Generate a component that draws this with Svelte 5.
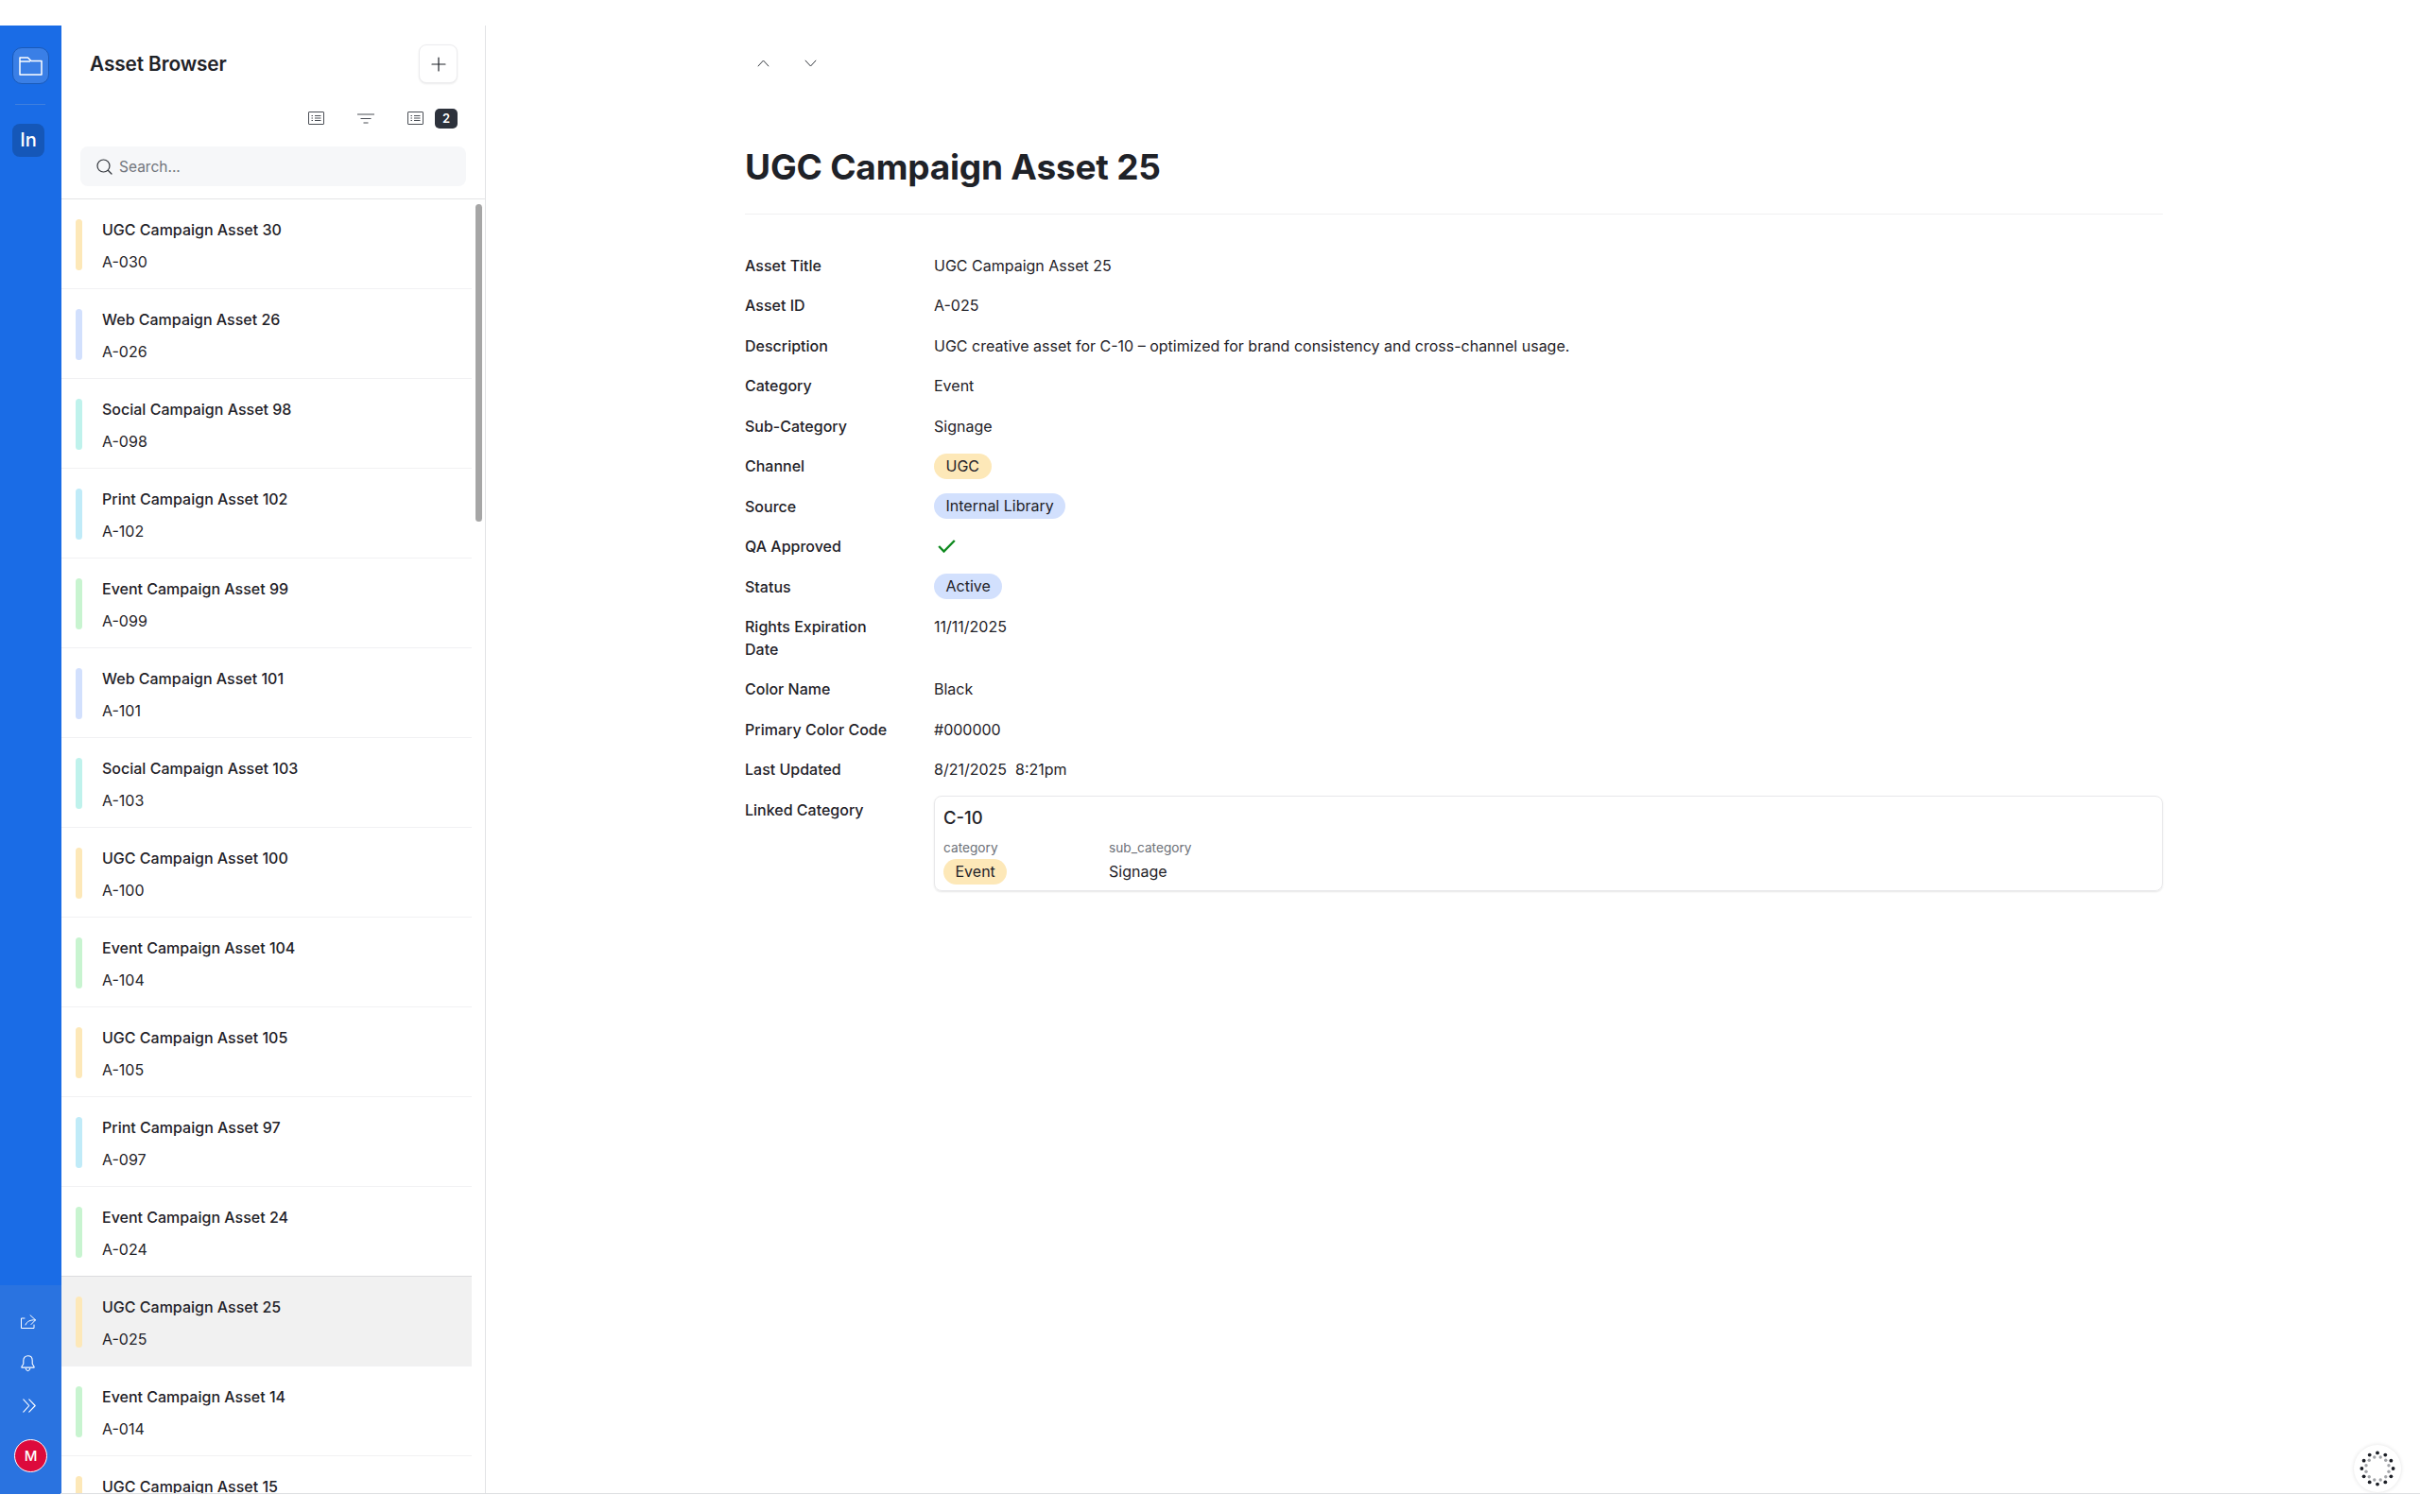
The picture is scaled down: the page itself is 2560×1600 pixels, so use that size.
<script>
	const assets = [
		{ title: 'UGC Campaign Asset 30', id: 'A-030', tone: 'ugc' },
		{ title: 'Web Campaign Asset 26', id: 'A-026', tone: 'web' },
		{ title: 'Social Campaign Asset 98', id: 'A-098', tone: 'social' },
		{ title: 'Print Campaign Asset 102', id: 'A-102', tone: 'print' },
		{ title: 'Event Campaign Asset 99', id: 'A-099', tone: 'event' },
		{ title: 'Web Campaign Asset 101', id: 'A-101', tone: 'web' },
		{ title: 'Social Campaign Asset 103', id: 'A-103', tone: 'social' },
		{ title: 'UGC Campaign Asset 100', id: 'A-100', tone: 'ugc' },
		{ title: 'Event Campaign Asset 104', id: 'A-104', tone: 'event' },
		{ title: 'UGC Campaign Asset 105', id: 'A-105', tone: 'ugc' },
		{ title: 'Print Campaign Asset 97', id: 'A-097', tone: 'print' },
		{ title: 'Event Campaign Asset 24', id: 'A-024', tone: 'event' },
		{ title: 'UGC Campaign Asset 25', id: 'A-025', tone: 'ugc', selected: true },
		{ title: 'Event Campaign Asset 14', id: 'A-014', tone: 'event' },
		{ title: 'UGC Campaign Asset 15', id: 'A-015', tone: 'ugc' }
	];

	const plainFields = [
		['Asset Title', 'UGC Campaign Asset 25'],
		['Asset ID', 'A-025'],
		['Description', 'UGC creative asset for C-10 – optimized for brand consistency and cross-channel usage.'],
		['Category', 'Event'],
		['Sub-Category', 'Signage']
	];

	const lowerFields = [
		['Color Name', 'Black'],
		['Primary Color Code', '#000000'],
		['Last Updated', '8/21/2025\u00a0\u00a08:21pm']
	];

	/* the loader in the corner: two rings of twelve dots */
	const dots = [];
	for (let i = 0; i < 12; i++) {
		const a = (i * 30 * Math.PI) / 180;
		dots.push({ x: 25 + 16.6 * Math.sin(a), y: 25 - 16.6 * Math.cos(a), r: 1.9, fill: '#1c1f26' });
		const b = a + Math.PI / 12;
		dots.push({ x: 25 + 12.4 * Math.sin(b), y: 25 - 12.4 * Math.cos(b), r: 1.7, fill: '#a2a4a8' });
	}
</script>

<div class="page">
	<nav class="rail">
		<div class="rail-top">
			<div class="tile">
				<svg width="25" height="20" viewBox="0 0 25 20" fill="none" stroke="#fff" stroke-width="1.5" stroke-linejoin="round">
					<path d="M1 19V1h8.500l3.500 3.500h11V19z" />
					<path d="M1 5h11" />
				</svg>
			</div>
			<div class="rail-rule"></div>
			<div class="logo">In</div>
		</div>
		<div class="rail-bottom">
			<svg width="16" height="15" viewBox="0 0 16 15" fill="none" stroke="#fff" stroke-width="1" stroke-linecap="round" stroke-linejoin="round">
				<path d="M10 .8L15.500 5.800 11 10.500M15.500 5.800C10 5.500 6 7.500 5 11" />
				<path d="M4 4H.5v10.500h13.500V11" />
			</svg>
			<svg width="15" height="18" viewBox="0 0 15 18" fill="none" stroke="#fff" stroke-width="1.1" stroke-linecap="round" stroke-linejoin="round">
				<path d="M7.500.8C4.700.8 2.800 2.900 2.800 5.700v3.500L.9 12.300c-.2.400 0 .8.500.8h12.200c.5 0 .7-.4.500-.8l-1.900-3.100V5.700C12.200 2.900 10.300.8 7.500.8z" />
				<path d="M5.200 14.200c.4 1.400 1.200 2.500 2.300 2.500s1.900-1.100 2.300-2.500" />
			</svg>
			<svg class="chevrons" width="14" height="15" viewBox="0 0 14 15" fill="none" stroke="#fff" stroke-width="1.100" stroke-linecap="round" stroke-linejoin="round">
				<path d="M.8.800l6 6.700-6 6.700M6.800.800l6.400 6.700-6.400 6.700" />
			</svg>
			<div class="avatar">M</div>
		</div>
	</nav>

	<aside class="browser">
		<header class="browser-head">
			<h2>Asset Browser</h2>
			<button class="add" aria-label="Add asset">
				<svg width="16" height="16" viewBox="0 0 16 16" fill="none" stroke="#1f2228" stroke-width="1.2" stroke-linecap="round">
					<path d="M8 1v14M1 8h14" />
				</svg>
			</button>
		</header>

		<div class="tools">
			<svg class="tool" width="17" height="14" viewBox="0 0 17 14" fill="none" stroke="#4a4e55" stroke-width="1">
				<rect x=".5" y=".5" width="16" height="13" rx=".5" />
				<path d="M3.500 4.500h1.500M3.500 7h1.500M3.500 9.500h1.500M7 4.500h6.500M7 7h6.500M7 9.500h6.500" />
			</svg>
			<svg class="tool filter" width="18" height="11" viewBox="0 0 18 11" fill="none" stroke="#4a4e55" stroke-width="1">
				<path d="M0 1h18M3.500 5.500h11M6.500 10h5" />
			</svg>
			<svg class="tool" width="17" height="14" viewBox="0 0 17 14" fill="none" stroke="#4a4e55" stroke-width="1">
				<rect x=".5" y=".5" width="16" height="13" rx=".5" />
				<path d="M3.500 4.500h1.500M3.500 7h1.500M3.500 9.500h1.500M7 4.500h6.500M7 7h6.500M7 9.500h6.500" />
			</svg>
			<span class="count">2</span>
		</div>

		<div class="search">
			<svg width="17" height="17" viewBox="0 0 17 17" fill="none" stroke="#31353b" stroke-width="1.2" stroke-linecap="round">
				<circle cx="7.500" cy="7.500" r="6.500" />
				<path d="M12.500 12.500l3.500 3.500" />
			</svg>
			<span>Search...</span>
		</div>

		<div class="list">
			{#each assets as asset}
				<div class="row" class:selected={asset.selected}>
					<span class="bar {asset.tone}"></span>
					<div class="row-text">
						<div class="row-title">{asset.title}</div>
						<div class="row-id">{asset.id}</div>
					</div>
				</div>
			{/each}
			<div class="scroll-thumb"></div>
		</div>
	</aside>

	<main class="detail">
		<div class="pager">
			<svg width="13" height="8" viewBox="0 0 13 8" fill="none" stroke="#33373d" stroke-width="1"><path d="M.8 7.200L6.500 1l5.700 6.200" /></svg>
			<svg width="13" height="8" viewBox="0 0 13 8" fill="none" stroke="#33373d" stroke-width="1"><path d="M.8.800L6.500 7l5.700-6.200" /></svg>
		</div>

		<h1>UGC Campaign Asset 25</h1>

		<div class="fields">
			{#each plainFields as [label, value]}
				<div class="label">{label}</div>
				<div class="value">{value}</div>
			{/each}

			<div class="label">Channel</div>
			<div class="value"><span class="pill amber">UGC</span></div>
			<div class="label">Source</div>
			<div class="value"><span class="pill blue">Internal Library</span></div>
			<div class="label">QA Approved</div>
			<div class="value check">
				<svg width="19" height="14" viewBox="0 0 19 14" fill="none" stroke="#0f8a1f" stroke-width="2.400"><path d="M1.200 7l5.300 5.500L17.800 1" /></svg>
			</div>
			<div class="label">Status</div>
			<div class="value"><span class="pill blue">Active</span></div>
			<div class="label">Rights Expiration Date</div>
			<div class="value">11/11/2025</div>

			{#each lowerFields as [label, value]}
				<div class="label">{label}</div>
				<div class="value">{value}</div>
			{/each}

			<div class="label">Linked Category</div>
			<div class="card">
				<div class="card-title">C-10</div>
				<div class="card-cols">
					<div>
						<div class="card-key">category</div>
						<span class="pill amber">Event</span>
					</div>
					<div>
						<div class="card-key">sub_category</div>
						<div class="card-val">Signage</div>
					</div>
				</div>
			</div>
		</div>
	</main>

	<div class="loader">
		<svg width="50" height="50" viewBox="0 0 50 50">
			{#each dots as d}
				<circle cx={d.x} cy={d.y} r={d.r} fill={d.fill} />
			{/each}
		</svg>
	</div>
</div>

<style>
	:global(body) {
		margin: 0;
		background: #fff;
		font-family: Inter, 'Liberation Sans', sans-serif;
		color: #1f2228;
	}
	.page {
		position: relative;
		display: flex;
		box-sizing: border-box;
		height: 1581px;
		padding-top: 27px;
		overflow: hidden;
	}
	.page::after {
		content: '';
		position: absolute;
		left: 64px;
		right: 0;
		bottom: 0;
		height: 1px;
		background: #dcdee1;
	}

	.rail {
		width: 65px;
		flex: none;
		display: flex;
		flex-direction: column;
		justify-content: space-between;
		background: #1a6ce6;
	}
	.rail-top {
		display: flex;
		flex-direction: column;
		padding: 23px 0 0 13px;
	}
	.tile {
		width: 39px;
		height: 39px;
		display: flex;
		align-items: center;
		justify-content: center;
		background: #3a7fe6;
		border: 1px solid #1a5ab8;
		border-radius: 10px;
		box-sizing: border-box;
	}
	.rail-rule {
		width: 32px;
		height: 1px;
		margin: 21px 0 20px 3px;
		background: #3f80de;
	}
	.logo {
		width: 34px;
		height: 35px;
		border-radius: 8px;
		background: #1557b8;
		color: #fff;
		font-size: 20px;
		font-weight: 500;
		line-height: 35px;
		text-align: center;
	}
	.rail-bottom {
		height: 221px;
		box-sizing: border-box;
		background: #2a73e0;
		display: flex;
		flex-direction: column;
		align-items: flex-start;
		padding: 31px 0 0 22px;
		gap: 28px;
	}
	.chevrons {
		margin-left: 2px;
	}
	.avatar {
		width: 35px;
		height: 35px;
		margin-left: -7px;
		box-sizing: border-box;
		border: 1px solid #fff;
		border-radius: 50%;
		background: #dd0a3c;
		color: #fff;
		font-size: 15px;
		font-weight: 500;
		line-height: 33px;
		text-align: center;
	}

	.browser {
		width: 449px;
		flex: none;
		display: flex;
		flex-direction: column;
		box-sizing: border-box;
		border-right: 1px solid #e3e4e6;
	}
	.browser-head {
		display: flex;
		align-items: center;
		justify-content: space-between;
		padding: 20px 29px 0 30px;
	}
	h2 {
		margin: 0;
		font-size: 20.800px;
		font-weight: 600;
		letter-spacing: -0.1px;
		color: #1f2228;
	}
	.add {
		width: 41px;
		height: 41px;
		padding: 0;
		display: flex;
		align-items: center;
		justify-content: center;
		background: #fff;
		border: 1px solid #ececee;
		border-radius: 8px;
		box-shadow: 0 1px 2px rgba(0, 0, 0, 0.08);
	}
	.tools {
		display: flex;
		align-items: center;
		justify-content: flex-end;
		padding: 0 29px;
		margin-top: 26px;
		height: 22px;
	}
	.tool {
		display: block;
	}
	.filter {
		margin: 0 35px;
	}
	.count {
		margin-left: 12px;
		width: 24px;
		height: 21px;
		border-radius: 5px;
		background: #2d323c;
		color: #fff;
		font-size: 13px;
		font-weight: 600;
		line-height: 21px;
		text-align: center;
	}
	.search {
		display: flex;
		align-items: center;
		gap: 7px;
		height: 42px;
		margin: 19px 20px 13px 20px;
		padding-left: 17px;
		background: #f6f7f9;
		border-radius: 8px;
		color: #71757c;
		font-size: 15.500px;
	}
	.list {
		position: relative;
		flex: 1;
		min-height: 0;
		overflow: hidden;
		border-top: 1px solid #e3e4e6;
	}
	.row {
		position: relative;
		display: flex;
		box-sizing: border-box;
		width: 434px;
		height: 95px;
		padding: 21px 0 0 15px;
		border-bottom: 1px solid #f1f1f3;
	}
	.row.selected {
		background: #f1f1f1;
		box-shadow: 0 -1px 0 #dcdcde;
	}
	.bar {
		width: 7px;
		height: 54px;
		flex: none;
		border-radius: 4px;
	}
	.bar.ugc { background: #fde8b8; }
	.bar.web { background: #d2e0fd; }
	.bar.social { background: #bff2ec; }
	.bar.print { background: #c0ebf8; }
	.bar.event { background: #c8f4d0; }
	.row-text {
		margin-left: 21px;
		font-size: 16px;
		line-height: 24px;
		color: #1f2228;
	}
	.row-title {
		font-weight: 500;
		margin-top: -1px;
	}
	.row-id {
		margin-top: 10px;
	}
	.scroll-thumb {
		position: absolute;
		top: 5px;
		right: 3px;
		width: 7px;
		height: 336px;
		border-radius: 4px;
		background: #a6a6a6;
	}

	.detail {
		flex: 1;
		padding: 0 272px 0 274px;
		min-width: 0;
	}
	.pager {
		display: flex;
		align-items: center;
		gap: 37px;
		height: 80px;
		padding-left: 13px;
		box-sizing: border-box;
	}
	h1 {
		margin: 0;
		height: 120px;
		box-sizing: border-box;
		padding-top: 46px;
		font-size: 37px;
		line-height: 48px;
		font-weight: 700;
		letter-spacing: -0.2px;
		color: #1f2228;
		border-bottom: 1px solid #f0f0f2;
	}
	.fields {
		display: grid;
		grid-template-columns: 160px 1fr;
		column-gap: 40px;
		row-gap: 18.45px;
		margin-top: 42px;
		font-size: 16px;
		line-height: 24px;
	}
	.label {
		font-weight: 500;
	}
	.value {
		color: #1f2228;
	}
	.check {
		line-height: 0;
		padding: 5px 0 0 4px;
	}
	.pill {
		display: block;
		width: fit-content;
		padding: 0 12.5px;
		border-radius: 14px;
		line-height: 27px;
		margin: -1.5px 0;
	}
	.pill.amber { background: #fde8b8; }
	.pill.blue { background: #d2e0fd; }
	.card {
		box-sizing: border-box;
		height: 101px;
		margin-top: -3px;
		padding: 9px 9px;
		border: 1px solid #e8e8ea;
		border-radius: 8px;
		box-shadow: 0 1px 2px rgba(0, 0, 0, 0.1);
	}
	.card-title {
		font-size: 18.500px;
		font-weight: 500;
		line-height: 26px;
	}
	.card-cols {
		display: grid;
		grid-template-columns: 175px 1fr;
		margin-top: 10px;
	}
	.card-key {
		font-size: 13.700px;
		line-height: 18px;
		margin-bottom: 4.500px;
		color: #6d7178;
	}
	.card-val {
		line-height: 27px;
		margin-top: -1.500px;
	}
	.loader {
		position: absolute;
		right: 20px;
		bottom: 2px;
		width: 50px;
		height: 50px;
		border-radius: 50%;
		background: #fff;
		box-shadow: 0 0 4px rgba(0, 0, 0, 0.12);
	}
	.loader svg {
		display: block;
	}
</style>
